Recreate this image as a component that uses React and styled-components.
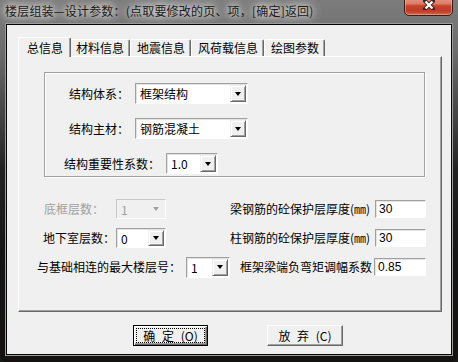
import React from "react";
import styled, { createGlobalStyle } from "styled-components";

const Global = createGlobalStyle`
  html, body { margin: 0; padding: 0; background: #1a1a1a; overflow: hidden; }
  body { font-family: "Noto Sans CJK SC", "Liberation Sans", sans-serif; font-size: 12px; color: #000; }
  * { box-sizing: border-box; }
`;

const Window = styled.div`
  width: 458px;
  height: 362px;
  display: flex;
  flex-direction: column;
  border-radius: 0 0 7px 7px;
  overflow: hidden;
  background: linear-gradient(180deg, #7c7c7c 0px, #6d6d6d 50px, #4a4a4a 105px, #222 170px, #141414 260px, #161111 100%);
`;

const TitleBar = styled.div`
  height: 24px;
  flex: none;
  display: flex;
  justify-content: space-between;
  align-items: flex-start;
  padding-left: 5px;
  padding-right: 5px;
`;

const TitleText = styled.div`
  margin-top: 3px;
  line-height: 16px;
  font-size: 12px;
  color: #1e1a18;
  white-space: nowrap;
  letter-spacing: 0.2px;
  text-shadow: 0 0 6px rgba(255,255,255,0.9), 0 0 10px rgba(255,255,255,0.75), 0 0 16px rgba(230,230,230,0.7);
`;

const CloseButton = styled.div`
  width: 49px;
  height: 21px;
  margin-top: -5px;
  border: 1px solid #3c1b15;
  border-radius: 0 0 5px 5px;
  background: linear-gradient(180deg, #e7a493 0%, #dc7d68 40%, #c4432c 52%, #c13c27 78%, #d2644a 100%);
  box-shadow: inset 0 0 0 1px rgba(255,200,190,0.45);
  display: flex;
  align-items: flex-start;
  justify-content: center;
  padding-top: 4px;
`;

const Client = styled.div`
  flex: none;
  height: 331px;
  margin: 0 6px 7px 6px;
  border: 1px solid #050505;
  box-shadow: 0 0 0 1px #9c9c9c;
  background: #f0f0f0;
  display: flex;
  flex-direction: column;
  padding: 12px 9px 0 11px;
`;

const TabStrip = styled.div`
  display: flex;
  align-items: flex-end;
  height: 19px;
  padding-left: 2px;
  position: relative;
  z-index: 2;
`;

const Tab = styled.div`
  height: ${p => (p.$active ? "20px" : "17px")};
  margin: ${p => (p.$active ? "0 -2px -1px -2px" : "0")};
  padding: ${p => (p.$active ? "0 7px 0 8px" : "0 5px 0 6px")};
  position: relative;
  z-index: ${p => (p.$active ? 3 : 1)};
  background: #f0f0f0;
  border-left: 1px solid #fff;
  border-top: 1px solid #fff;
  border-right: 1px solid #696969;
  border-top-left-radius: 2px;
  border-top-right-radius: 2px;
  box-shadow: inset -1px 0 #a0a0a0;
  display: flex;
  align-items: center;
  line-height: 14px;
  white-space: nowrap;
  color: #000;
`;

const Panel = styled.div`
  width: 424px;
  height: 256px;
  flex: none;
  background: #f0f0f0;
  border: 1px solid;
  border-color: #fff #696969 #696969 #fff;
  box-shadow: inset -1px -1px #a0a0a0;
  display: flex;
  flex-direction: column;
  padding: 15px 15px 0 0;
  position: relative;
  z-index: 1;
`;

const Group = styled.div`
  margin-left: 25px;
  width: 381px;
  height: 105px;
  border: 1px solid #a0a0a0;
  box-shadow: inset 1px 1px #fff, 1px 1px #fff;
  display: flex;
  flex-direction: column;
  gap: 14px;
  padding-top: 10px;
`;

const Field = styled.div`
  display: flex;
  align-items: center;
  padding-left: ${p => p.$indent || 0}px;
  gap: ${p => p.$gap || 6}px;
`;

const Label = styled.span`
  white-space: nowrap;
  line-height: 14px;
  color: ${p => (p.$disabled ? "#a0a0a0" : "#000")};
`;

const ComboBox = styled.div`
  width: ${p => p.$w}px;
  height: ${p => p.$h || 21}px;
  display: flex;
  align-items: stretch;
  background: ${p => (p.$disabled ? "#f0f0f0" : "#fff")};
  border: 1px solid;
  border-color: ${p => (p.$disabled ? "#c8c8c8 #fff #fff #c8c8c8" : "#a0a0a0 #fff #fff #a0a0a0")};
  box-shadow: ${p => (p.$disabled ? "none" : "inset 1px 1px #e3e3e3")};
  padding: 1px;
`;

const ComboValue = styled.span`
  flex: 1;
  display: flex;
  align-items: center;
  padding-left: 3px;
  white-space: nowrap;
  color: ${p => (p.$disabled ? "#a0a0a0" : "#000")};
`;

const DropButton = styled.span`
  width: 16px;
  flex: none;
  display: flex;
  align-items: center;
  justify-content: center;
  background: #f0f0f0;
  border: 1px solid;
  border-color: ${p => (p.$disabled ? "transparent" : "#f0f0f0 #696969 #696969 #f0f0f0")};
  box-shadow: ${p => (p.$disabled ? "none" : "inset 1px 1px #fff, inset -1px -1px #a0a0a0")};
`;

const Arrow = styled.span`
  width: 0;
  height: 0;
  border-left: 3.5px solid transparent;
  border-right: 3.5px solid transparent;
  border-top: 4px solid ${p => (p.$disabled ? "#a0a0a0" : "#000")};
`;

const TextBox = styled.div`
  width: ${p => p.$w || 51}px;
  height: 18px;
  display: flex;
  align-items: center;
  padding-left: 3px;
  background: #fff;
  border: 1px solid;
  border-color: #a0a0a0 #fff #fff #a0a0a0;
  box-shadow: inset 1px 1px #e3e3e3;
  font-family: "Liberation Sans", "Noto Sans CJK SC", sans-serif;
`;

const Lower = styled.div`
  margin-top: 22px;
  display: flex;
  flex-direction: column;
  gap: 9px;
`;

const LowerRow = styled.div`
  height: 20px;
  display: flex;
  align-items: center;
  justify-content: space-between;
`;

const ButtonBar = styled.div`
  display: flex;
  gap: 59px;
  padding-left: 115px;
  margin-top: 13px;
`;

const Button = styled.div`
  width: ${p => p.$w || 75}px;
  height: 21px;
  background: #f0f0f0;
  border: 1px solid;
  border-color: ${p => (p.$default ? "#000" : "#fff #696969 #696969 #fff")};
  box-shadow: ${p =>
    p.$default
      ? "inset 1px 1px #fff, inset -1px -1px #696969, inset -2px -2px #a0a0a0"
      : "inset -1px -1px #a0a0a0"};
  padding: 2px;
  display: flex;
`;

const ButtonFace = styled.span`
  flex: 1;
  display: flex;
  align-items: center;
  justify-content: center;
  border: 1px dotted ${p => (p.$focus ? "#000" : "transparent")};
  white-space: pre;
  word-spacing: 4px;
  line-height: 13px;
`;

function Combo({ value, w, h, disabled }) {
  return (
    <ComboBox $w={w} $h={h} $disabled={disabled}>
      <ComboValue $disabled={disabled}>{value}</ComboValue>
      <DropButton $disabled={disabled}>
        <Arrow $disabled={disabled} />
      </DropButton>
    </ComboBox>
  );
}

const tabs = ["总信息", "材料信息", "地震信息", "风荷载信息", "绘图参数"];

export default function App() {
  return (
    <>
      <Global />
      <Window>
        <TitleBar>
          <TitleText>楼层组装—设计参数：(点取要修改的页、项，[确定]返回)</TitleText>
          <CloseButton>
            <svg width="12" height="10" viewBox="0 0 12 10">
              <path d="M2 1 L10 9 M10 1 L2 9" stroke="#3a2220" strokeWidth="4" strokeLinecap="square" fill="none" />
              <path d="M2.5 1.5 L9.5 8.5 M9.5 1.5 L2.5 8.5" stroke="#fff" strokeWidth="2.2" fill="none" />
            </svg>
          </CloseButton>
        </TitleBar>
        <Client>
          <TabStrip>
            {tabs.map((t, i) => (
              <Tab key={t} $active={i === 0}>{t}</Tab>
            ))}
          </TabStrip>
          <Panel>
            <Group>
              <Field $indent={24}>
                <Label>结构体系：</Label>
                <Combo value="框架结构" w={113} />
              </Field>
              <Field $indent={24}>
                <Label>结构主材：</Label>
                <Combo value="钢筋混凝土" w={113} />
              </Field>
              <Field $indent={19}>
                <Label>结构重要性系数：</Label>
                <Combo value="1.0" w={52} />
              </Field>
            </Group>
            <Lower>
              <LowerRow>
                <Field $indent={25} $gap={12}>
                  <Label $disabled>底框层数：</Label>
                  <Combo value="1" w={50} h={20} disabled />
                </Field>
                <Field $gap={5}>
                  <Label>梁钢筋的砼保护层厚度(㎜)</Label>
                  <TextBox>30</TextBox>
                </Field>
              </LowerRow>
              <LowerRow>
                <Field $indent={24} $gap={1}>
                  <Label>地下室层数：</Label>
                  <Combo value="0" w={50} h={20} />
                </Field>
                <Field $gap={5}>
                  <Label>柱钢筋的砼保护层厚度(㎜)</Label>
                  <TextBox>30</TextBox>
                </Field>
              </LowerRow>
              <LowerRow>
                <Field $indent={18} $gap={5}>
                  <Label>与基础相连的最大楼层号：</Label>
                  <Combo value="1" w={44} h={21} />
                </Field>
                <Field $gap={2}>
                  <Label>框架梁端负弯矩调幅系数</Label>
                  <TextBox $w={52}>0.85</TextBox>
                </Field>
              </LowerRow>
            </Lower>
          </Panel>
          <ButtonBar>
            <Button $default>
              <ButtonFace $focus>{"确 定 (O)"}</ButtonFace>
            </Button>
            <Button $w={76}>
              <ButtonFace>{"放 弃 (C)"}</ButtonFace>
            </Button>
          </ButtonBar>
        </Client>
      </Window>
    </>
  );
}
